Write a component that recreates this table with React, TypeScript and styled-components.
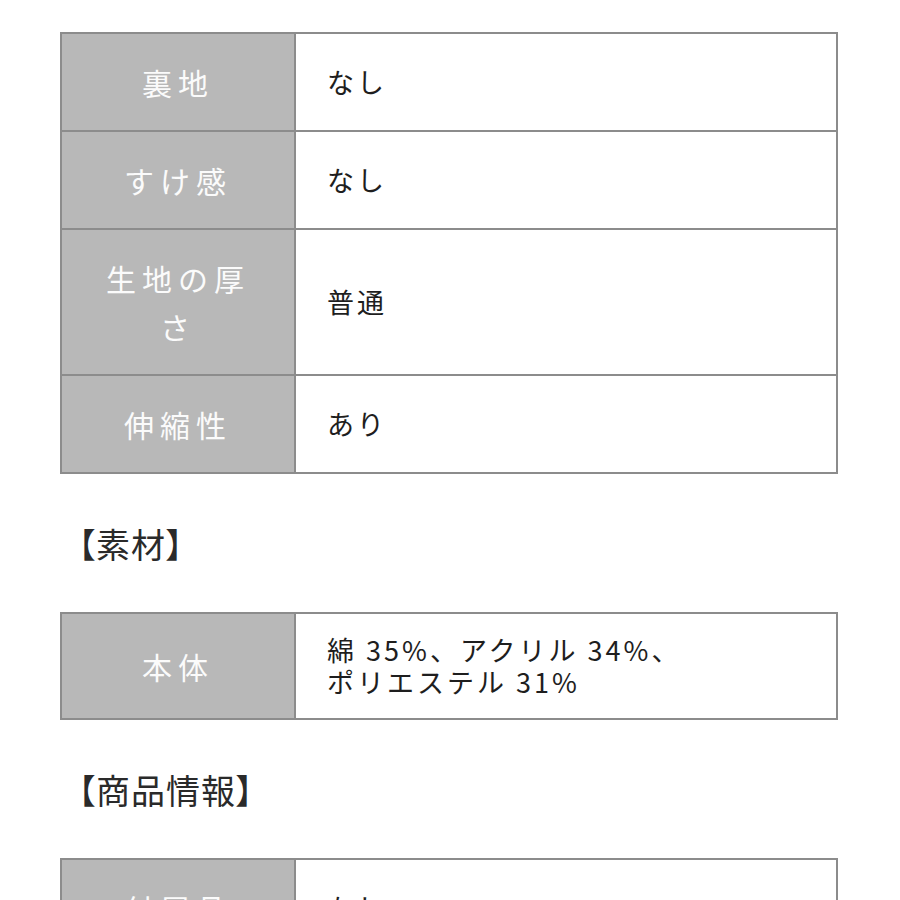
import React from "react";
import styled, { createGlobalStyle } from "styled-components";

const GlobalStyle = createGlobalStyle`
  html, body {
    margin: 0;
    padding: 0;
    background: #ffffff;
  }
  body {
    font-family: "Noto Sans CJK JP", "Noto Sans", sans-serif;
    color: #222222;
  }
`;

const Page = styled.div`
  padding: 32px 62px 40px 60px;
  width: 778px;
`;

const SpecTable = styled.table`
  width: 778px;
  border-collapse: collapse;
  table-layout: fixed;
  border: 2px solid #8c8c8c;

  col.label {
    width: 234px;
  }

  td {
    border: 2px solid #8c8c8c;
  }
`;

const Label = styled.td`
  background: #b8b8b8;
  color: #fbfbfb;
  font-size: 30px;
  font-weight: 400;
  letter-spacing: 6px;
  line-height: 48px;
  text-align: center;
  padding: 24px 28px;
  vertical-align: middle;
`;

const Value = styled.td`
  background: #ffffff;
  color: #1e1e1e;
  font-size: 27px;
  letter-spacing: 3px;
  line-height: 32px;
  padding: 20px 20px 20px 31px;
  vertical-align: middle;
`;

const Heading = styled.h2`
  margin: 46px 0 44px 0;
  padding-left: 18px;
  font-size: 34px;
  font-weight: 400;
  letter-spacing: 1px;
  line-height: 48px;
  color: #2a2a2a;
  font-feature-settings: "palt";
`;

type Row = { label: string; value: React.ReactNode };

const Table: React.FC<{ rows: Row[] }> = ({ rows }) => (
  <SpecTable>
    <colgroup>
      <col className="label" />
      <col />
    </colgroup>
    <tbody>
      {rows.map((r) => (
        <tr key={r.label}>
          <Label>{r.label}</Label>
          <Value>{r.value}</Value>
        </tr>
      ))}
    </tbody>
  </SpecTable>
);

const App: React.FC = () => {
  return (
    <>
      <GlobalStyle />
      <Page>
        <Table
          rows={[
            { label: "裏地", value: "なし" },
            { label: "すけ感", value: "なし" },
            { label: "生地の厚さ", value: "普通" },
            { label: "伸縮性", value: "あり" },
          ]}
        />
        <Heading>【素材】</Heading>
        <Table
          rows={[
            {
              label: "本体",
              value: (
                <>
                  綿 35%、アクリル 34%、
                  <br />
                  ポリエステル 31%
                </>
              ),
            },
          ]}
        />
        <Heading>【商品情報】</Heading>
        <Table
          rows={[
            { label: "付属品", value: "なし" },
            { label: "生産国", value: "中国" },
          ]}
        />
      </Page>
    </>
  );
};

export default App;
